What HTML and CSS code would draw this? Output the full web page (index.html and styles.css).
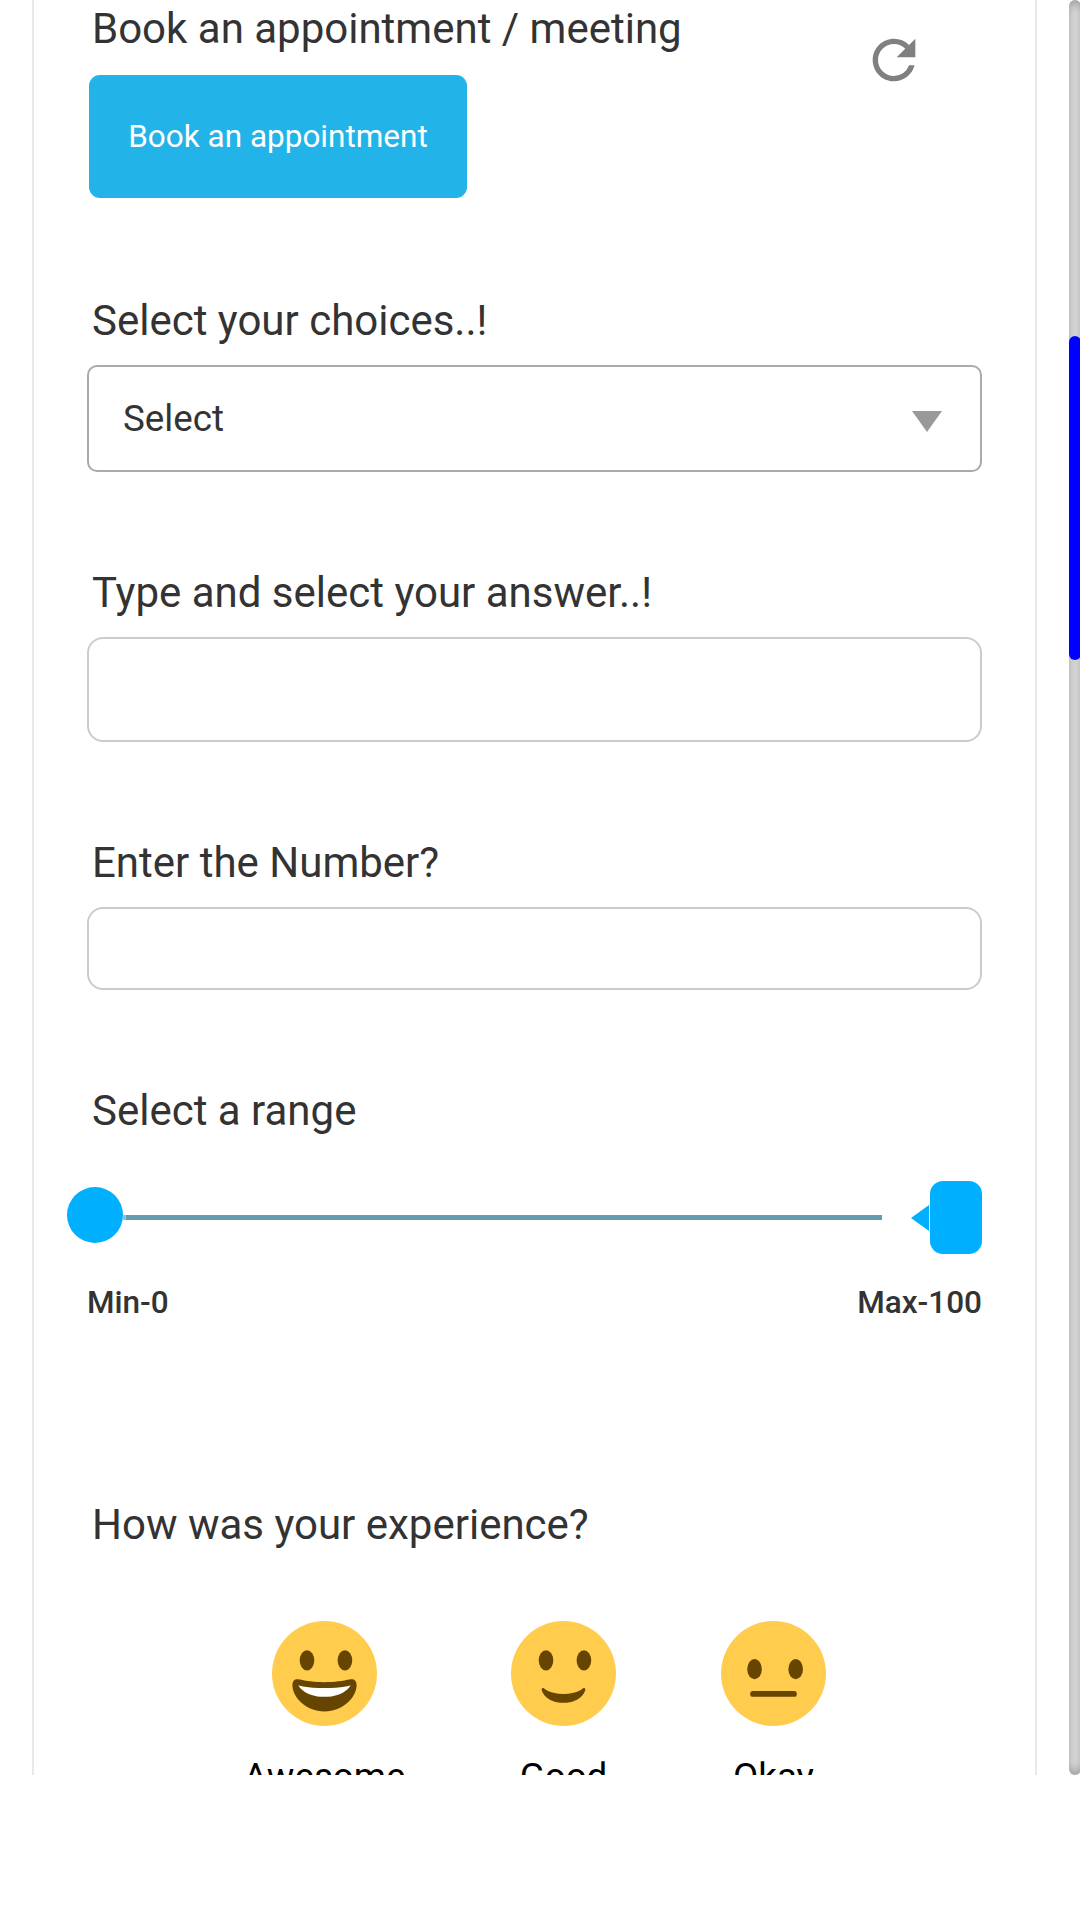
FILE: index.html
```html
<!DOCTYPE html>
<html lang="en">
<head>
<meta charset="utf-8">
<title>Form</title>
<link rel="stylesheet" href="styles.css">
</head>
<body>
<div class="viewport">
  <main class="card">
    <button class="refresh" aria-label="Refresh">
      <svg viewBox="0 0 24 24"><path d="M17.65 6.35A7.96 7.96 0 0 0 12 4c-4.42 0-7.99 3.58-7.99 8s3.57 8 7.99 8c3.73 0 6.84-2.55 7.73-6h-2.08A5.99 5.99 0 0 1 12 18c-3.31 0-6-2.69-6-6s2.69-6 6-6c1.66 0 3.14.69 4.22 1.78L13 11h7V4l-2.35 2.35z"/></svg>
    </button>
    <section class="field field-book">
      <h2 class="title">Book an appointment / meeting</h2>
      <button class="book">Book an appointment</button>
    </section>
    <section class="field field-select">
      <h2 class="title">Select your choices..!</h2>
      <div class="select"><span>Select</span><svg class="arrow" viewBox="0 0 30 21"><path d="M0 0h30L15 21z"/></svg></div>
    </section>
    <section class="field field-type">
      <h2 class="title">Type and select your answer..!</h2>
      <div class="input input-tall"></div>
    </section>
    <section class="field field-number">
      <h2 class="title">Enter the Number?</h2>
      <div class="input"></div>
    </section>
    <section class="field field-range">
      <h2 class="title">Select a range</h2>
      <div class="slider">
        <span class="thumb"></span>
        <span class="track"></span>
        <svg class="pointer" viewBox="0 0 18 26"><path d="M18 0v26L0 13z"/></svg>
        <span class="value"></span>
      </div>
      <div class="limits"><span>Min-0</span><span>Max-100</span></div>
    </section>
    <section class="field field-rating">
      <h2 class="title">How was your experience?</h2>
      <div class="ratings">
        <div class="rating rating-awesome">
          <svg class="face" viewBox="0 0 36 36"><circle cx="18" cy="18" r="18" fill="#ffcc4d"/><g fill="#664500"><ellipse cx="12" cy="13.5" rx="2.5" ry="3.5"/><ellipse cx="25" cy="13.5" rx="2.5" ry="3.5"/><path d="M18 21c-3.623 0-6.027-.422-9-1-.679-.131-2 0-2 2 0 4 4.595 9 11 9 6.404 0 11-5 11-9 0-2-1.321-2.132-2-2-2.973.578-5.377 1-9 1z"/></g><path fill="#fff" d="M9 22s3 1 9 1 9-1 9-1-2 4-9 4-9-4-9-4z"/></svg>
          <span>Awesome</span>
        </div>
        <div class="rating rating-good">
          <svg class="face" viewBox="0 0 36 36"><circle cx="18" cy="18" r="18" fill="#ffcc4d"/><g fill="#664500"><ellipse cx="12" cy="13.5" rx="2.5" ry="3.5"/><ellipse cx="25" cy="13.5" rx="2.5" ry="3.5"/><path d="M10.515 23.621C10.56 23.8 11.683 28 18 28c6.318 0 7.44-4.2 7.485-4.379.055-.217-.043-.442-.237-.554-.195-.111-.439-.078-.6.077C24.629 23.163 22.694 25 18 25s-6.63-1.837-6.648-1.855C11.256 23.05 11.128 23 11 23c-.084 0-.169.021-.246.064-.196.112-.294.339-.239.557z"/></g></svg>
          <span>Good</span>
        </div>
        <div class="rating rating-okay">
          <svg class="face" viewBox="0 0 36 36"><circle cx="18" cy="18" r="18" fill="#ffcc4d"/><g fill="#664500"><ellipse cx="11.5" cy="16.5" rx="2.5" ry="3.5"/><ellipse cx="25.6" cy="16.5" rx="2.5" ry="3.5"/><rect x="10" y="24" width="16" height="2" rx="1"/></g></svg>
          <span>Okay</span>
        </div>
      </div>
    </section>
  </main>
  <div class="scroll"><div class="scroll-thumb"></div></div>
</div>
</body>
</html>
```
FILE: styles.css
```css
* { box-sizing: border-box; }
body {
  margin: 0;
  background: #fff;
  color: #333;
  font-family: Roboto, "Liberation Sans", sans-serif;
}
.viewport {
  display: flex;
  width: 1080px;
  height: 1775px;
  padding-left: 32px;
  overflow: hidden;
}
.card {
  position: relative;
  flex: none;
  width: 1005px;
  margin-right: 32px;
  padding: 0 53px;
  border: solid #e9e9e9;
  border-width: 0 2px;
}
.title {
  height: 50px;
  margin: 0 0 0 5px;
  font-size: 42px;
  line-height: 52px;
  font-weight: 400;
  white-space: nowrap;
}
.refresh {
  position: absolute;
  top: 28px;
  left: 828px;
  width: 64px;
  height: 64px;
  padding: 0;
  border: 0;
  background: none;
}
.refresh svg { display: block; fill: #808080; }
.field-book { height: 295px; padding-top: 3px; }
.field-select { height: 272px; }
.field-type { height: 270px; }
.field-number { height: 248px; }
.field-range { height: 414px; }
.book {
  display: block;
  width: 378px;
  height: 123px;
  margin: 22px 0 0 2px;
  padding: 0;
  border: 0;
  border-radius: 11px;
  background: #22b3e9;
  color: #fff;
  font: 400 31.5px/36px Roboto, "Liberation Sans", sans-serif;
}
.select {
  display: flex;
  justify-content: space-between;
  align-items: center;
  height: 107px;
  margin-top: 20px;
  padding: 0 38px 0 34px;
  border: 2px solid #aaa;
  border-radius: 10px;
  font-size: 36.75px;
}
.arrow { width: 30px; height: 21px; margin-top: 5px; fill: #999; }
.input {
  height: 83px;
  margin-top: 20px;
  border: 2px solid #ccc;
  border-radius: 16px;
}
.input-tall { height: 105px; }
.slider {
  display: flex;
  align-items: center;
  height: 73px;
  margin: 46px 0 0 -20px;
}
.thumb {
  width: 56px;
  height: 56px;
  margin-top: -5px;
  border-radius: 50%;
  background: #00b0ff;
}
.track {
  width: 759px;
  height: 5px;
  background: linear-gradient(90deg, #7fcbee 3px, #669bb0 3px);
}
.pointer { width: 18px; height: 26px; margin: 0 1px 0 29px; fill: #00b0ff; }
.value { width: 52px; height: 73px; border-radius: 13px; background: #00b0ff; }
.limits {
  display: flex;
  justify-content: space-between;
  margin-top: 31px;
  font-size: 31.5px;
  line-height: 36px;
  font-weight: 500;
}
.ratings { display: flex; padding-left: 131px; margin-top: 72px; }
.rating {
  display: flex;
  flex-direction: column;
  align-items: center;
  color: #000;
  font-size: 36.75px;
  line-height: 42px;
}
.rating-awesome { width: 213px; }
.rating-good { width: 265px; }
.rating-okay { width: 155px; }
.face { width: 105px; height: 105px; margin-bottom: 30px; }
.scroll {
  flex: none;
  width: 12px;
  height: 1775px;
  padding-top: 336px;
  border-radius: 6px;
  background: #fff;
  box-shadow: inset 0 0 13px #808080;
}
.scroll-thumb { height: 324px; border-radius: 6px; background: #00f; }
```
